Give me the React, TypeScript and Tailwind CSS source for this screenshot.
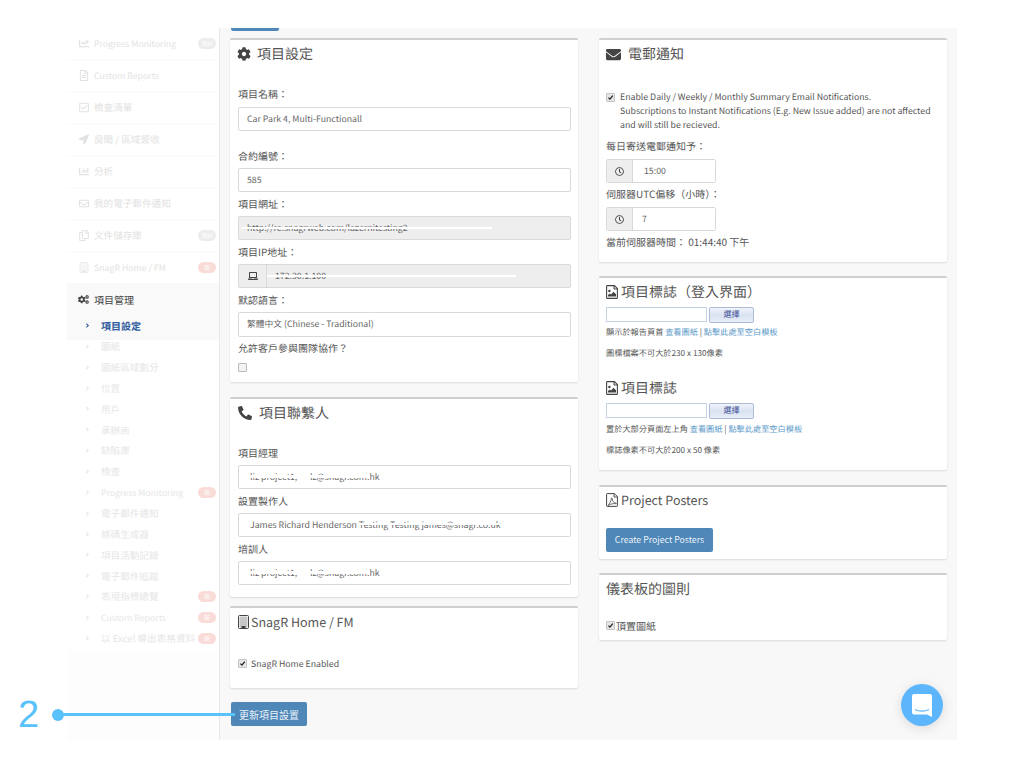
import React from "react";
import {
  FaChartLine, FaRegFileAlt, FaRegCheckSquare, FaLocationArrow, FaChartBar, FaRegEnvelope, FaRegCopy,
  FaCogs, FaAngleRight, FaCog, FaPhone, FaEnvelope, FaRegClock, FaLaptop,
} from "react-icons/fa";

function Tablet({ className = "" }: { className?: string }) {
  return (
    <svg viewBox="0 0 11 14" className={className}>
      <rect x="0.5" y="0.5" width="10" height="13" rx="1" fill="none" stroke="currentColor" />
      <rect x="1.5" y="1.5" width="8" height="11" fill="currentColor" opacity="0.3" />
      <rect x="3.5" y="11" width="4" height="2" fill="currentColor" />
    </svg>
  );
}
function ImageFile() {
  return (
    <svg viewBox="0 0 12 14" className="w-3 h-[14px] text-[#444] mr-[3px] shrink-0">
      <path d="M0.6 1.2a.6.6 0 0 1 .6-.6h7.2l3 3v9.2a.6.6 0 0 1-.6.6H1.2a.6.6 0 0 1-.6-.6z" fill="none" stroke="currentColor" strokeWidth="1.1" />
      <path d="M8 .6v3.4h3.4" fill="none" stroke="currentColor" strokeWidth="1" />
      <circle cx="3.4" cy="6" r="1.2" fill="currentColor" />
      <path d="M2 11.6h8V9.2L7.6 6.8 5 9.4 3.8 8.4 2 10z" fill="currentColor" />
    </svg>
  );
}
function PdfFile() {
  return (
    <svg viewBox="0 0 12 14" className="w-3 h-[14px] text-[#444] mr-[3px] shrink-0">
      <path d="M0.6 1.2a.6.6 0 0 1 .6-.6h7.2l3 3v9.2a.6.6 0 0 1-.6.6H1.2a.6.6 0 0 1-.6-.6z" fill="none" stroke="currentColor" strokeWidth="1" />
      <path d="M8 .6v3.4h3.4" fill="none" stroke="currentColor" strokeWidth="0.9" />
      <path d="M2.2 11.8c1.4-.8 2.6-3 3.2-6.4.2-1 .9-.8.8.2-.2 2.2 1.6 4.2 3.6 4.4.8.1.7.8-.1.7-2.6-.3-5.6.3-7 1.6-.6.4-1-.1-.5-.5z" fill="none" stroke="currentColor" strokeWidth="0.8" />
    </svg>
  );
}

const top = [
  { t: "Progress Monitoring", I: FaChartLine, b: "測試", c: "gray" },
  { t: "Custom Reports", I: FaRegFileAlt },
  { t: "檢查清單", I: FaRegCheckSquare },
  { t: "房間 / 區域簽收", I: FaLocationArrow },
  { t: "分析", I: FaChartBar },
  { t: "我的電子郵件通知", I: FaRegEnvelope },
  { t: "文件儲存庫", I: FaRegCopy, b: "測試", c: "gray" },
  { t: "SnagR Home / FM", I: Tablet, b: "新", c: "red" },
];
const subs: [string, boolean][] = [
  ["圖紙", false], ["圖紙區域劃分", false], ["位置", false], ["用戶", false], ["承辦商", false], ["缺陷庫", false], ["檢查", false],
  ["Progress Monitoring", true], ["電子郵件通知", false], ["條碼生成器", false], ["項目活動記錄", false], ["電子郵件追蹤", false],
  ["表現指標總覽", true], ["Custom Reports", true], ["以 Excel 導出表格資料", true],
];
const navSize = (t: string) => (/^[A-Z]/.test(t) ? "text-[8.75px]" : "text-[9.6px]");

function Panel({ className, children }: { className: string; children: React.ReactNode }) {
  return <section className={`bg-white border-t-2 border-[#cfcfcf] rounded-[2px] shadow-[0_1px_2px_rgba(0,0,0,0.12)] ${className}`}>{children}</section>;
}
function Heading({ icon, children, className = "text-[14px]" }: { icon?: React.ReactNode; children: React.ReactNode; className?: string }) {
  return <div className={`flex items-center leading-[20px] text-[#555] ${className}`}>{icon}{children}</div>;
}
function Label({ children, className = "" }: { children: React.ReactNode; className?: string }) {
  return <div className={`text-[10px] leading-[14px] text-[#555] ${className}`}>{children}</div>;
}
function Field({ children, disabled, className = "", line }: { children?: React.ReactNode; disabled?: boolean; className?: string; line?: string }) {
  return (
    <div className={`relative h-6 w-[333px] border border-[#d9d9d9] rounded-[2px] pl-2 text-[8.75px] leading-[22px] text-[#666] overflow-hidden ${disabled ? "bg-[#eeeeee]" : "bg-white"} ${className}`}>
      {children}
      {line ? <span className={`absolute bg-white ${line}`} /> : null}
    </div>
  );
}
function Check({ className = "" }: { className?: string }) {
  return (
    <span className={`inline-flex shrink-0 w-[9px] h-[9px] items-center justify-center bg-[#e6e6e6] border border-[#c4c4c4] rounded-[1px] text-[#222] ${className}`}>
      <svg viewBox="0 0 10 10" className="w-[7px] h-[7px]"><path d="M2 5.2 L4.2 7.4 L8.2 2.4" fill="none" stroke="currentColor" strokeWidth="1.8" /></svg>
    </span>
  );
}
function ClockField({ value, pad }: { value: string; pad: string }) {
  return (
    <div className="flex h-6 w-[110px] border border-[#d9d9d9] rounded-[2px] overflow-hidden text-[8.75px] text-[#666]">
      <div className="w-[26px] bg-[#eeeeee] border-r border-[#d9d9d9] flex items-center justify-center text-[#444]"><FaRegClock className="text-[9px]" /></div>
      <div className={`flex-1 bg-white leading-[22px] ${pad}`}>{value}</div>
    </div>
  );
}
function FileRow() {
  return (
    <div className="flex gap-[2px] h-4">
      <div className="w-[101px] h-[15px] border border-[#c5d3e6] bg-white" />
      <div className="w-[45px] h-4 border border-[#aebbd6] rounded-[2px] bg-gradient-to-b from-[#f0f4fa] via-[#d9e3f2] to-[#e7edf7] text-[8px] leading-[14px] text-center text-[#3d4f94]">選擇</div>
    </div>
  );
}

export default function App() {
  return (
    <div className="relative h-[768px] w-[1024px] bg-white overflow-hidden [text-rendering:geometricPrecision]" style={{ fontFamily: '"Noto Sans CJK TC","Noto Sans",sans-serif' }}>
      <div className="ml-[67px] pt-7 w-[890px]">
        <div className="flex h-[712px] bg-[#f8f8f8]">
          <aside className="w-[153px] shrink-0 bg-[#fdfdfd] border-r border-[#e8e8e8]">
            <div className="w-[152px] bg-white">
              {top.map(({ t, I, b, c }) => (
                <div key={t} className={`h-8 flex items-center pl-[11px] pr-[3px] border-b border-[#fafafa] text-[#e2e2e2] ${navSize(t)}`}>
                  <span className="w-[11px] mr-[5px] shrink-0 flex justify-center"><I className="text-[10px] w-[10px] h-[11px]" /></span>
                  <span className="flex-1 whitespace-nowrap">{t}</span>
                  {b ? <span className={`w-[18px] h-[11px] rounded-full text-[6px] leading-[11px] text-center text-white ${c === "red" ? "bg-[#f9dcd8]" : "bg-[#ececec]"}`}>{b}</span> : null}
                </div>
              ))}
              <div className="h-[56px] bg-[#f9f9f9]">
                <div className="h-[30px] flex items-center pl-[11px] text-[10px] text-[#444]">
                  <FaCogs className="text-[11px] w-[11px] mr-[5px]" />項目管理
                </div>
                <div className="h-[22px] flex items-center pl-[17px] text-[10px] font-bold text-[#2e5c9e]">
                  <FaAngleRight className="text-[7px] mr-[10px]" />項目設定
                </div>
              </div>
              <div className="-mt-[4px] pb-[1px]">
                {subs.map(([t, n]) => (
                  <div key={t} className={`h-[20.85px] flex items-center pl-[17px] pr-[3px] text-[#e6e6e6] ${navSize(t)}`}>
                    <FaAngleRight className="text-[7px] mr-[10px] shrink-0" />
                    <span className="flex-1 whitespace-nowrap">{t}</span>
                    {n ? <span className="w-[18px] h-[11px] rounded-full bg-[#f9dcd8] text-[6px] leading-[11px] text-center text-white">新</span> : null}
                  </div>
                ))}
              </div>
            </div>
          </aside>

          <main className="flex-1 flex pl-[10px] gap-[21px]">
            <div className="w-[348px]">
              <div className="ml-[1px] w-12 h-[3px] bg-[#4f87b8] rounded-b-[2px]" />
              <Panel className="mt-[7px] h-[344px] pt-1 px-2">
                <Heading icon={<FaCog className="-ml-[1px] text-[14px] text-[#444] mr-[6px]" />}>項目設定</Heading>
                <Label className="mt-[23px]">項目名稱：</Label>
                <Field className="mt-[6px]">Car Park 4, Multi-Functionall</Field>
                <Label className="mt-[18px]">合約編號：</Label>
                <Field className="mt-[5px]">585</Field>
                <Label className="mt-[5px]">項目網址：</Label>
                <Field className="mt-[5px]" disabled line="h-[2px] left-[2px] right-[78px] top-[10px]">http://re.snagrweb.com/lazernitesting2</Field>
                <Label className="mt-[5px]">項目IP地址：</Label>
                <div className="relative mt-[5px] flex h-6 w-[333px] border border-[#d9d9d9] rounded-[2px] bg-[#eeeeee] text-[8.75px] text-[#666] overflow-hidden">
                  <div className="w-[28px] border-r border-[#d9d9d9] flex items-center justify-center text-[#444]"><FaLaptop className="text-[10px]" /></div>
                  <div className="pl-2 leading-[22px]">172.30.1.100</div>
                  <span className="absolute h-[2px] bg-white left-[28px] right-[54px] top-[10px]" />
                </div>
                <Label className="mt-[5px]">默認語言：</Label>
                <Field className="mt-[5px] h-[25px]">繁體中文 (Chinese - Traditional)</Field>
                <Label className="mt-[4px]">允許客戶參與團隊協作？</Label>
                <span className="mt-[8px] block w-[9px] h-[9px] border border-[#bbb] rounded-[1px] bg-[#f2f2f2]" />
              </Panel>

              <Panel className="mt-[15px] h-[200px] pt-1 px-2">
                <Heading icon={<FaPhone className="text-[14px] text-[#444] mr-[7px] scale-x-[-1]" />}>項目聯繫人</Heading>
                <Label className="mt-[23px]">項目經理</Label>
                <Field className="mt-[5px] pl-[11px]" line="h-[3px] left-[11px] right-[200px] top-[9px]">liz project1, · lz@snagr.com.hk</Field>
                <Label className="mt-[5px]">設置製作人</Label>
                <Field className="mt-[5px] pl-[11px]" line="h-[2px] left-[118px] right-[70px] top-[9px]">James Richard Henderson Testing Testing james@snagr.co.uk</Field>
                <Label className="mt-[5px]">培訓人</Label>
                <Field className="mt-[5px] pl-[11px]" line="h-[3px] left-[11px] right-[200px] top-[9px]">liz project1, · lz@snagr.com.hk</Field>
              </Panel>

              <Panel className="mt-[9px] h-[82px] pt-1 px-2">
                <Heading className="text-[12.5px]" icon={<Tablet className="w-[11px] h-[14px] text-[#444] mr-[2px]" />}>SnagR Home / FM</Heading>
                <div className="mt-[25px] flex items-center text-[8.75px] text-[#555]"><Check className="mr-[4px]" />SnagR Home Enabled</div>
              </Panel>

              <button className="mt-[14px] ml-[1px] block w-[76px] h-6 bg-[#4f87b8] rounded-[2px] text-[10px] text-[#eaf2f8]">更新項目設置</button>
            </div>

            <div className="w-[348px]">
              <Panel className="mt-[10px] h-[224px] pt-1 pl-[7px] pr-2">
                <Heading icon={<FaEnvelope className="text-[15px] text-[#444] mr-[7px]" />}>電郵通知</Heading>
                <div className="mt-[26px] flex text-[8.75px] leading-[14px] text-[#555]">
                  <Check className="mt-[3px] mr-[5px]" />
                  <div>Enable Daily / Weekly / Monthly Summary Email Notifications.<br />Subscriptions to Instant Notifications (E.g. New Issue added) are not affected<br />and will still be recieved.</div>
                </div>
                <Label className="mt-[7px] mb-[6px]">每日寄送電郵通知予：</Label>
                <ClockField value="15:00" pad="pl-[11px]" />
                <Label className="mt-[4px] mb-[6px]">伺服器UTC偏移（小時）：</Label>
                <ClockField value="7" pad="pl-[9px]" />
                <Label className="mt-[4px]">當前伺服器時間： 01:44:40 下午</Label>
              </Panel>

              <Panel className="mt-[14px] h-[194px] pt-1 pl-[7px] pr-2">
                <Heading icon={<ImageFile />}>項目標誌（登入界面）</Heading>
                <div className="mt-[5px]"><FileRow /></div>
                <div className="mt-[3px] text-[8.2px] leading-[12px] text-[#555]">顯示於報告頁首 <span className="text-[#5b9ac9]">查看圖紙</span> | <span className="text-[#5b9ac9]">點擊此處至空白模板</span></div>
                <div className="mt-[9px] text-[8.2px] leading-[12px] text-[#555]">圖標檔案不可大於230 x 130像素</div>
                <Heading icon={<ImageFile />} className="mt-[19px] text-[14px]">項目標誌</Heading>
                <div className="mt-[5px]"><FileRow /></div>
                <div className="mt-[4px] text-[8.2px] leading-[12px] text-[#555]">置於大部分頁面左上角 <span className="text-[#5b9ac9]">查看圖紙</span> | <span className="text-[#5b9ac9]">點擊此處至空白模板</span></div>
                <div className="mt-[9px] text-[8.2px] leading-[12px] text-[#555]">標誌像素不可大於200 x 50 像素</div>
              </Panel>

              <Panel className="mt-[15px] h-[74px] pt-[3px] pl-[7px] pr-2">
                <Heading className="text-[12.5px]" icon={<PdfFile />}>Project Posters</Heading>
                <button className="mt-[18px] block w-[107px] h-6 bg-[#4f87b8] rounded-[2px] text-[8.75px] text-[#eaf2f8]">Create Project Posters</button>
              </Panel>

              <Panel className="mt-[14px] h-[67px] pt-1 pl-[7px] pr-2">
                <Heading>儀表板的圖則</Heading>
                <div className="mt-[19px] flex items-center text-[10px] text-[#555]"><Check className="mr-[1px]" />頂置圖紙</div>
              </Panel>
            </div>
          </main>
        </div>
      </div>

      {/* annotation callout */}
      <div className="absolute left-[18px] top-[696px] text-[38px] leading-[38px] font-light text-[#5ac2fa]" style={{ fontFamily: '"Liberation Sans",sans-serif' }}>2</div>
      <div className="absolute left-[52px] top-[709px] w-3 h-3 rounded-full bg-[#5ac2fa]" />
      <div className="absolute left-[58px] top-[713px] w-[177px] h-[3px] bg-[#5ac2fa]" />

      {/* chat launcher */}
      <div className="absolute left-[901px] top-[684px] w-[42px] h-[42px] rounded-full bg-[#5db6fc] shadow-[0_2px_12px_rgba(0,0,0,0.12)] flex items-center justify-center">
        <svg viewBox="0 0 20 23" className="w-5 h-[23px]">
          <path d="M2 0h16a2 2 0 0 1 2 2v21l-5-2.6H2a2 2 0 0 1-2-2V2a2 2 0 0 1 2-2z" fill="#fff" />
          <path d="M3 15.5c4 2.2 10 2.2 14 0" fill="none" stroke="#5db6fc" strokeWidth="1.2" />
        </svg>
      </div>
    </div>
  );
}
